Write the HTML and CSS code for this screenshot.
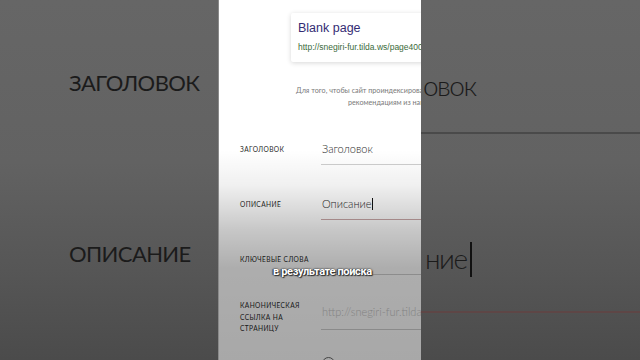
FILE: index.html
```html
<!DOCTYPE html>
<html lang="ru">
<head>
<meta charset="utf-8">
<title>SEO</title>
<link rel="stylesheet" href="styles.css">
</head>
<body>
<div class="frame">
  <div class="side side-left">
    <div class="big-label label-a">ЗАГОЛОВОК</div>
    <div class="big-label label-b">ОПИСАНИЕ</div>
  </div>
  <div class="center">
    <div class="snippet">
      <div class="snippet-title">Blank page</div>
      <div class="snippet-url">http://snegiri-fur.tilda.ws/page4008015.html</div>
    </div>
    <div class="intro">
      <div class="intro-line line-1">Для того, чтобы сайт проиндексировался</div>
      <div class="intro-line line-2">рекомендациям из нашего</div>
    </div>
    <div class="form">
      <div class="row">
        <div class="label">Заголовок</div>
        <div class="field">Заголовок</div>
      </div>
      <div class="row">
        <div class="label">Описание</div>
        <div class="field field-active">Описание<span class="caret"></span></div>
      </div>
      <div class="row">
        <div class="label">Ключевые слова</div>
        <div class="field"></div>
      </div>
      <div class="row row-multi">
        <div class="label">Каноническая ссылка на страницу</div>
        <div class="field field-placeholder">http://snegiri-fur.tilda.ws</div>
      </div>
    </div>
    <div class="radio"></div>
    <div class="shade"></div>
    <div class="caption">в результате поиска</div>
  </div>
  <div class="side side-right">
    <div class="big-input input-a">овок</div>
    <div class="big-input input-b">ние<span class="big-caret"></span></div>
  </div>
</div>
</body>
</html>
```

FILE: styles.css
```css
html, body {
  margin: 0;
  padding: 0;
}
body {
  width: 640px;
  height: 360px;
  overflow: hidden;
  background: #555;
  font-family: "Lato", "Liberation Sans", sans-serif;
}
.frame {
  display: grid;
  grid-template-columns: 219px 202px 219px;
  height: 360px;
}
.side {
  background: linear-gradient(to bottom, #666666 0%, #626262 45%, #565656 75%, #4b4b4b 100%);
  overflow: hidden;
  white-space: nowrap;
}
.side-left {
  border-right: 1px solid #8a8a8a;
}
.big-label {
  font-size: 22px;
  line-height: 24px;
  color: #1b1b1b;
  letter-spacing: -0.6px;
  padding-left: 69px;
}
.label-a { margin-top: 71px; }
.label-b { margin-top: 147px; }

.big-input {
  font-size: 28px;
  line-height: 28px;
  font-weight: 300;
  color: #1b1b1b;
  letter-spacing: -1.5px;
  padding-left: 2px;
}
.input-a {
  padding-top: 71px;
  padding-bottom: 33px;
  border-bottom: 2px solid #4a4a4a;
}
.input-b {
  margin-top: 108px;
  padding-left: 4px;
  padding-bottom: 34px;
  border-bottom: 2px solid #5e4646;
}
.big-caret {
  display: inline-block;
  width: 2px;
  height: 35px;
  background: #111;
  vertical-align: -8px;
  margin-left: 3px;
}

.center {
  position: relative;
  background: #ffffff;
  overflow: hidden;
  white-space: nowrap;
}
.snippet {
  margin: 13px -40px 0 72px;
  padding: 8px 8px 9px 7px;
  background: #fff;
  box-shadow: 0 1px 5px rgba(0, 0, 0, 0.16);
  border-radius: 2px;
  font-family: "Liberation Sans", Arial, sans-serif;
}
.snippet-title {
  font-size: 12.5px;
  line-height: 15px;
  color: #342c74;
}
.snippet-url {
  margin-top: 6px;
  font-size: 8.5px;
  line-height: 11px;
  color: #3b6b3b;
}
.intro {
  margin-top: 23px;
  font-size: 7.2px;
  line-height: 12px;
  color: #7a7a7a;
}
.line-1 { padding-left: 77px; }
.line-2 { padding-left: 129px; }

.form {
  margin-top: 26px;
}
.row {
  display: grid;
  grid-template-columns: 102px 1fr;
  margin-bottom: 25px;
}
.label {
  padding: 9px 0 0 21px;
  font-size: 6.6px;
  line-height: 10px;
  text-transform: uppercase;
  letter-spacing: 0.4px;
  color: #2a2a2a;
  white-space: normal;
}
.field {
  padding: 7px 0 8px 1px;
  font-size: 11px;
  line-height: 14px;
  font-weight: 300;
  color: #2a2a2a;
  border-bottom: 1px solid #cfcfcf;
  height: 14px;
}
.field-active {
  border-bottom-color: #c9a7a7;
}
.caret {
  display: inline-block;
  width: 1px;
  height: 12px;
  background: #111;
  vertical-align: -2px;
}
.row-multi .label {
  padding-top: 0;
  line-height: 11.5px;
  width: 70px;
}
.row-multi .field {
  padding-top: 5px;
  padding-bottom: 10px;
  color: #c4c4c4;
  overflow: hidden;
}
.radio {
  margin: -3px 0 0 103px;
  width: 11px;
  height: 11px;
  border: 1.5px solid #666;
  border-radius: 50%;
}
.shade {
  position: absolute;
  inset: 0;
  pointer-events: none;
  background: linear-gradient(to bottom,
    rgba(0, 0, 0, 0) 0px,
    rgba(0, 0, 0, 0) 150px,
    rgba(0, 0, 0, 0.06) 185px,
    rgba(0, 0, 0, 0.22) 230px,
    rgba(0, 0, 0, 0.32) 268px,
    rgba(0, 0, 0, 0.34) 360px);
}
.caption {
  position: absolute;
  left: 54px;
  top: 265px;
  font-family: "Roboto", "Liberation Sans", sans-serif;
  font-weight: 700;
  font-size: 11px;
  line-height: 14px;
  letter-spacing: -0.35px;
  color: #ffffff;
  text-shadow: 0 0 2px #222, 1px 1px 1px #333, -1px 0 1px #333;
}
```
